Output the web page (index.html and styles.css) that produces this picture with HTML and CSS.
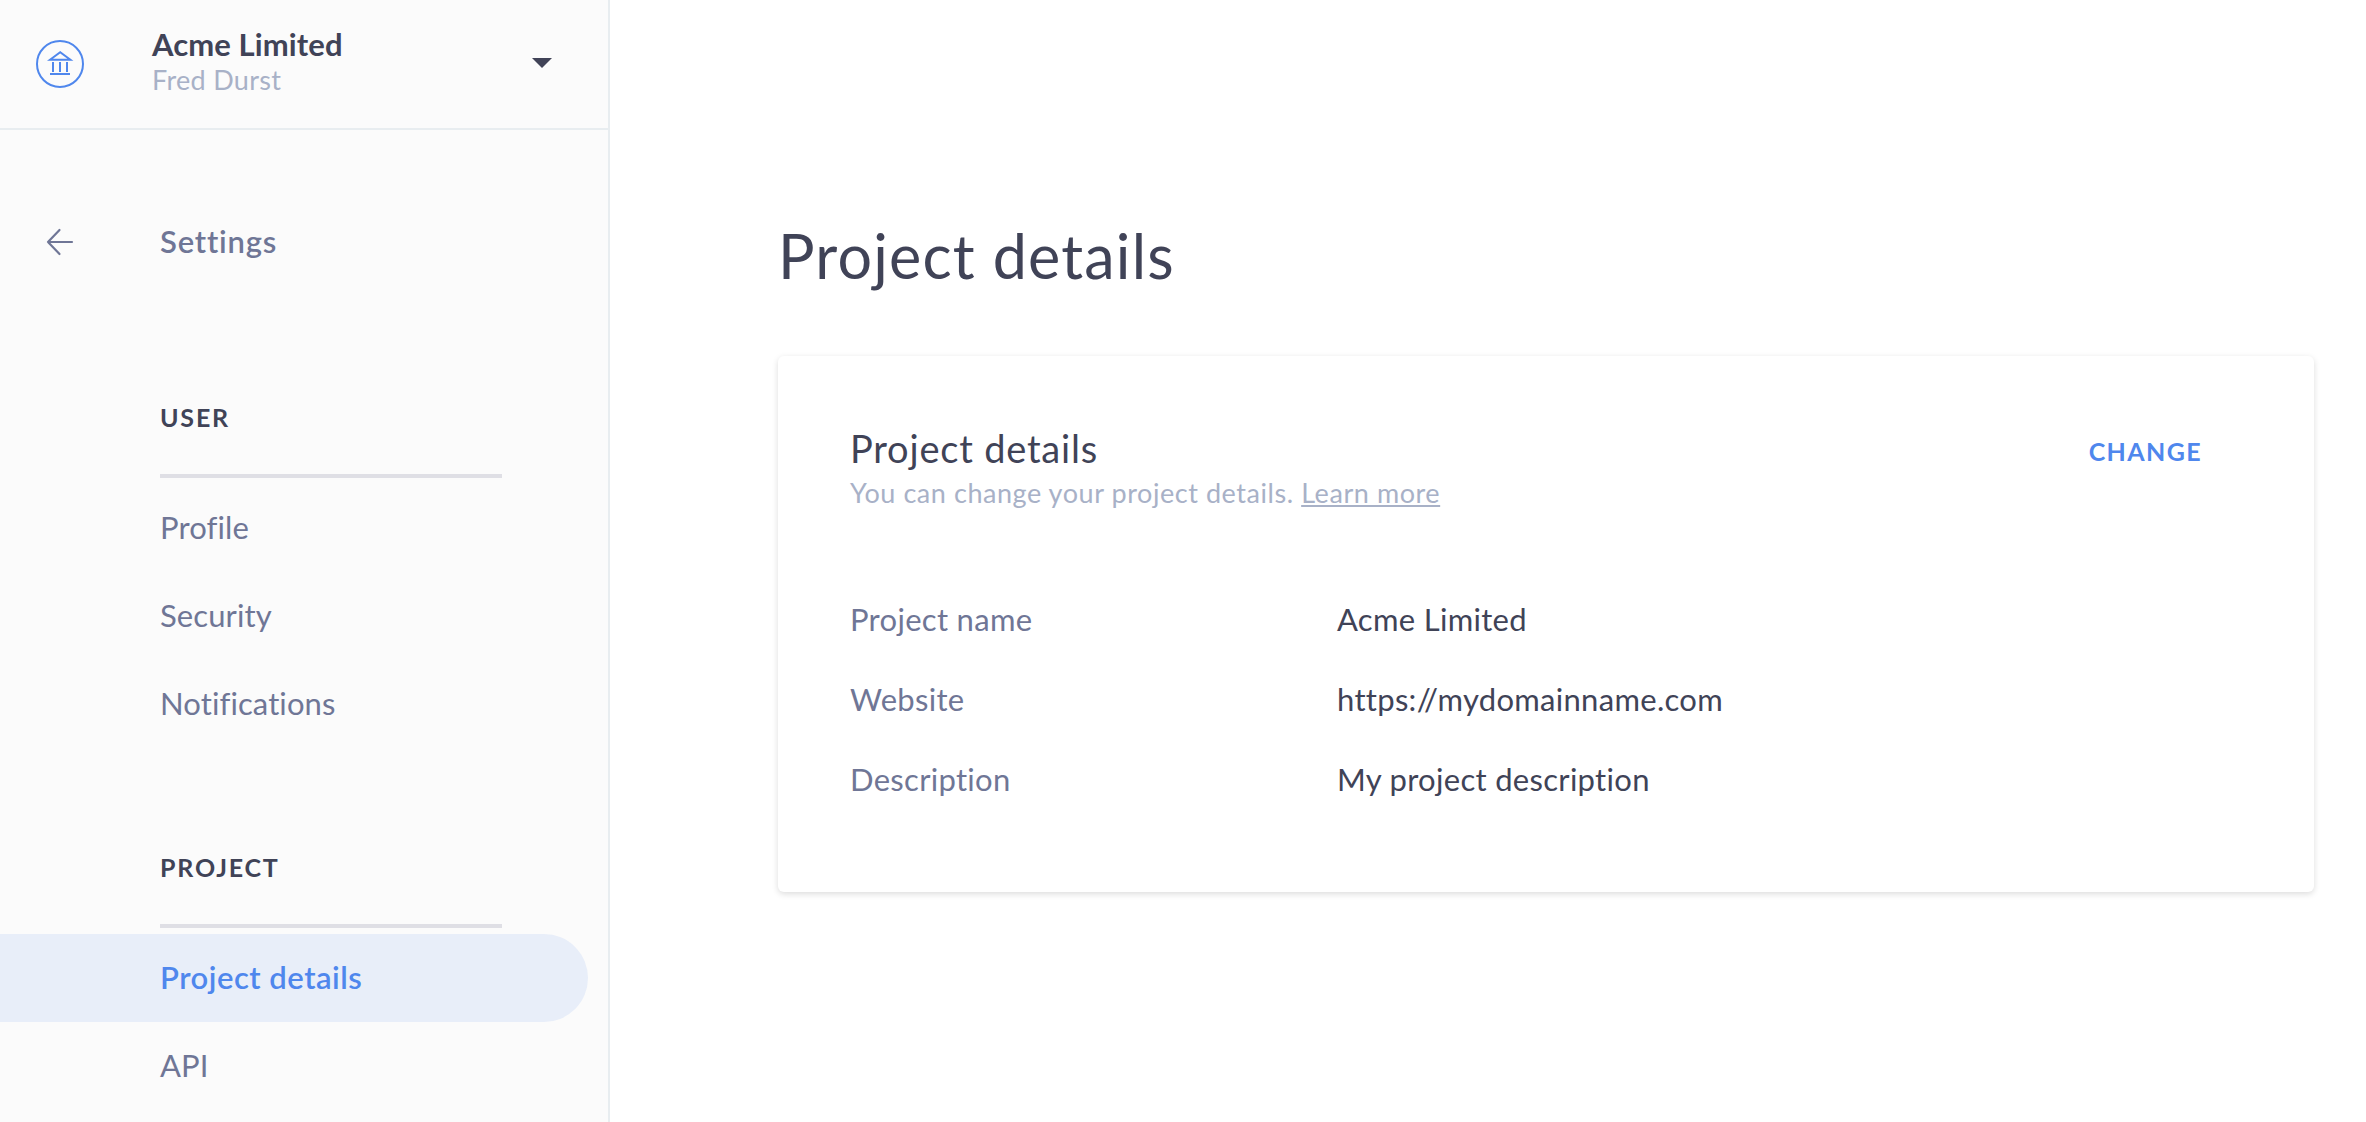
FILE: index.html
```html
<!DOCTYPE html>
<html lang="en">
<head>
  <meta charset="UTF-8">
  <meta name="viewport" content="width=device-width, initial-scale=1.0">
  <title>Project details</title>
  <link rel="stylesheet" href="styles.css">
</head>
<body>
  <aside class="sidebar">
    <div class="account">
      <svg class="account-logo" viewBox="0 0 48 48" width="48" height="48">
        <circle cx="24" cy="24" r="23" />
        <path d="M14 19.8 L24.2 12.2 L34.4 19.8 Z M17 22 V32 M24 22 V32 M31 22 V32 M14 34 H34" />
      </svg>
      <div class="account-text">
        <div class="account-name">Acme Limited</div>
        <div class="account-user">Fred Durst</div>
      </div>
      <svg class="caret" viewBox="0 0 20 10" width="20" height="10">
        <path d="M0 0 H20 L10 10 Z" />
      </svg>
    </div>

    <div class="back">
      <svg class="back-arrow" viewBox="0 0 28 28" width="28" height="28">
        <path d="M26 14 H2 M13.5 2 L2 14 L13.5 26" />
      </svg>
      <span class="back-title">Settings</span>
    </div>

    <nav class="group">
      <h2 class="group-title">USER</h2>
      <a class="item">Profile</a>
      <a class="item">Security</a>
      <a class="item">Notifications</a>
    </nav>

    <nav class="group">
      <h2 class="group-title">PROJECT</h2>
      <a class="item active">Project details</a>
      <a class="item">API</a>
    </nav>
  </aside>

  <main class="content">
    <h1 class="page-title">Project details</h1>

    <section class="card">
      <div class="card-header">
        <div>
          <h3 class="card-title">Project details</h3>
          <p class="card-subtitle">You can change your project details. <a class="link">Learn more</a></p>
        </div>
        <a class="change">CHANGE</a>
      </div>

      <dl class="details">
        <dt>Project name</dt>
        <dd>Acme Limited</dd>
        <dt>Website</dt>
        <dd>https://mydomainname.com</dd>
        <dt>Description</dt>
        <dd>My project description</dd>
      </dl>
    </section>
  </main>
</body>
</html>
```
FILE: styles.css
```css
* {
  box-sizing: border-box;
}

body {
  display: flex;
  height: 1122px;
  margin: 0;
  overflow: hidden;
  font-family: Lato, sans-serif;
  font-size: 31px;
  letter-spacing: 0.3px;
  color: #404357;
  background-color: #fff;
}

h1, h2, h3, p, dl, dd {
  margin: 0;
}

.sidebar {
  width: 610px;
  flex-shrink: 0;
  background-color: #fbfbfb;
  border-right: 2px solid #e8edf0;
}

.account {
  display: flex;
  align-items: center;
  height: 130px;
  padding: 0 56px 0 36px;
  border-bottom: 2px solid #e8edf0;
}

.account-logo {
  fill: none;
  stroke: #4f87ed;
  stroke-width: 2;
}

.account-text {
  flex: 1;
  padding: 0 0 3px 68px;
}

.account-name {
  margin-bottom: 3px;
  font-weight: bold;
  line-height: 32px;
  letter-spacing: 0.1px;
}

.account-user {
  font-size: 27px;
  line-height: 34px;
  color: #a8b1c7;
}

.caret {
  margin-bottom: 2px;
  fill: #404357;
}

.back {
  display: flex;
  align-items: center;
  height: 88px;
  margin-top: 68px;
  padding-left: 46px;
}

.back-arrow {
  fill: none;
  stroke: #6f7696;
  stroke-width: 2.2;
  stroke-linecap: round;
  stroke-linejoin: round;
}

.back-title {
  padding: 0 0 2px 86px;
  font-weight: 600;
  letter-spacing: 0.8px;
  color: #6f7696;
}

.group {
  padding-top: 88px;
}

.group + .group {
  padding-top: 76px;
}

.group-title {
  width: 342px;
  height: 104px;
  margin: 0 0 6px 160px;
  padding-top: 27px;
  border-bottom: 4px solid #dfdfe5;
  font-size: 25px;
  font-weight: bold;
  line-height: 32px;
  letter-spacing: 1.8px;
}

.item {
  display: block;
  width: 588px;
  height: 88px;
  padding-left: 160px;
  line-height: 86px;
  letter-spacing: 0.1px;
  color: #6f7696;
}

.item.active {
  border-radius: 0 44px 44px 0;
  background-color: #e8eef9;
  font-weight: 600;
  letter-spacing: 0.5px;
  color: #4f87ed;
}

.content {
  flex: 1;
  padding: 216px 52px 0 168px;
}

.page-title {
  height: 140px;
  font-size: 61px;
  font-weight: normal;
  line-height: 80px;
  letter-spacing: 1.2px;
}

.card {
  height: 536px;
  padding: 67px 72px 0;
  border-radius: 6px;
  box-shadow: 0 2px 6px rgba(0, 0, 0, 0.14);
}

.card-header {
  display: flex;
  justify-content: space-between;
  height: 156px;
}

.card-title {
  font-size: 38px;
  font-weight: normal;
  line-height: 50px;
  letter-spacing: 0.8px;
}

.card-subtitle {
  font-size: 27px;
  line-height: 39px;
  letter-spacing: 0.56px;
  color: #a8b1c7;
}

.link {
  text-decoration: underline;
}

.change {
  padding: 10px 40px 0 0;
  font-size: 25px;
  font-weight: bold;
  line-height: 36px;
  letter-spacing: 1.4px;
  color: #4f87ed;
}

.details {
  display: grid;
  grid-template-columns: 487px 1fr;
  line-height: 80px;
}

.details dt {
  color: #6f7696;
}
```
